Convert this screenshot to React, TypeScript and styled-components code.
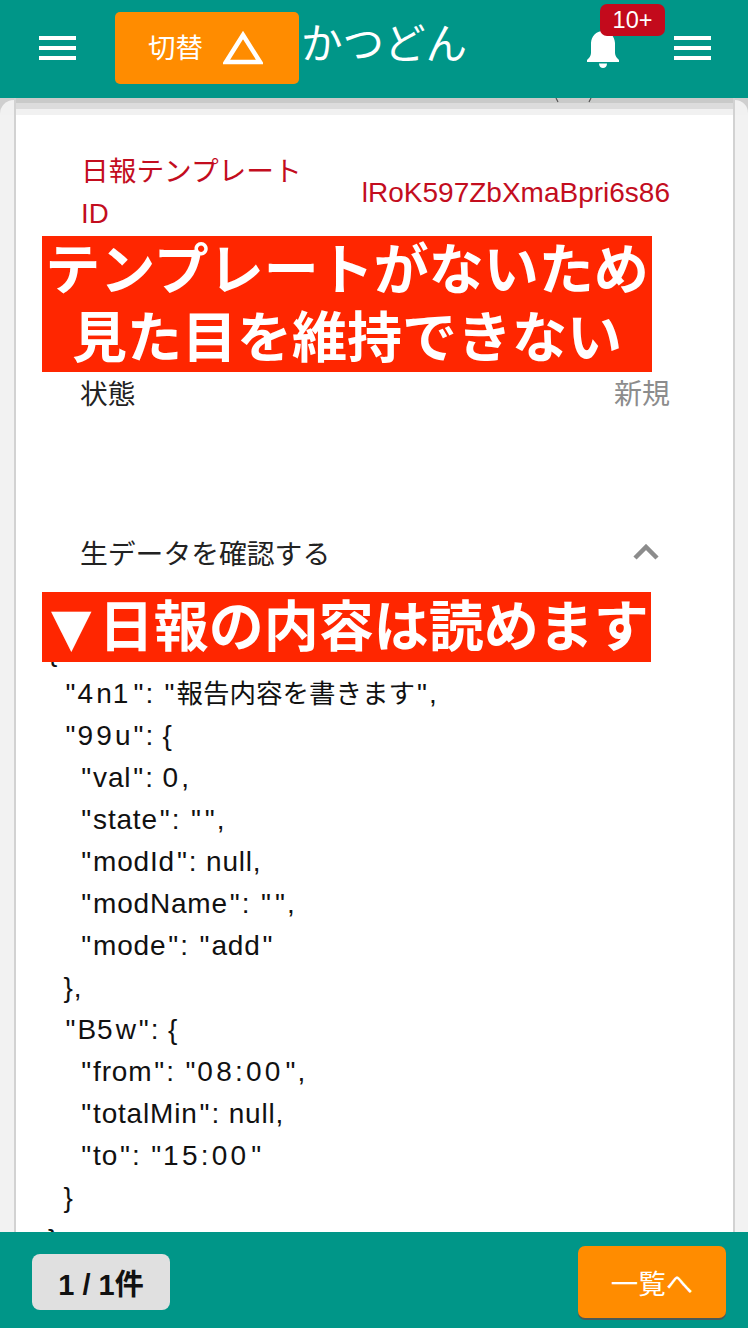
import React from 'react';
import styled, { createGlobalStyle } from 'styled-components';

const rawData = `{
  "4n1": "報告内容を書きます",
  "99u": {
    "val": 0,
    "state": "",
    "modId": null,
    "modName": "",
    "mode": "add"
  },
  "B5w": {
    "from": "08:00",
    "totalMin": null,
    "to": "15:00"
  }
}`;

type TokenKind = 'indent' | 'quote' | 'digit' | 'jp' | 'text';

const kindOf = (t: string): TokenKind => {
  if (/^ +$/.test(t)) return 'indent';
  if (t === '"') return 'quote';
  if (/^\d/.test(t)) return 'digit';
  if (/^[\u3040-\u9fff]/.test(t)) return 'jp';
  return 'text';
};

// the json font in the shot is wider on quotes and digits
const tokens = rawData.match(/^ +|\n|"|\d+(?::\d+)?|[\u3040-\u9fff]+|[^"\d\n\u3040-\u9fff]+/gm) || [];

const MenuIcon = () => (
  <svg width="37" height="24" viewBox="0 0 37 24" fill="#fff">
    <rect x="0" y="0" width="37" height="4" />
    <rect x="0" y="10" width="37" height="4" />
    <rect x="0" y="20" width="37" height="4" />
  </svg>
);

const BellIcon = () => (
  <svg width="32" height="38" viewBox="0 0 32 38" fill="#fff">
    <path d="M16 1C23 1 27.500 6 28 13V23C28 26 30 28 32 30V32H0V30C2 28 4 26 4 23V13C4.500 6 9 1 16 1Z" />
    <path d="M12 33.500H20C20 36.500 18 38 16 38S12 36.500 12 33.500Z" />
  </svg>
);

const App = () => {
  return (
    <Page>
      <GlobalStyle />
      <Header>
        <MenuButton><MenuIcon /></MenuButton>
        <SwitchButton>
          <SwitchLabel>切替</SwitchLabel>
          <svg width="40" height="34" viewBox="0 0 40 34" fill="none">
            <path d="M20 4 L37 31 H3 Z" stroke="#fff" strokeWidth="4.500" />
          </svg>
        </SwitchButton>
        <Title>かつどん</Title>
        <BellWrap>
          <BellIcon />
          <Badge>10+</Badge>
        </BellWrap>
        <MenuButton><MenuIcon /></MenuButton>
      </Header>

      <Content>
        <Strip>
          <Corner $side="left" />
          <Bands>
            <svg width="40" height="5" viewBox="0 0 40 5" fill="none">
              <path d="M1 0 L3 4 M36 0 L34 4" stroke="#555" strokeWidth="1.200" />
            </svg>
          </Bands>
          <Corner $side="right" />
        </Strip>
        <Card>
          <Row>
            <Label $red>日報テンプレート<br />ID</Label>
            <Value $red>lRoK597ZbXmaBpri6s86</Value>
          </Row>
          <Row $state>
            <Label>状態</Label>
            <Value>新規</Value>
          </Row>
          <Toggle>
            <span>生データを確認する</span>
            <svg width="26" height="16" viewBox="0 0 26 16" fill="none">
              <path d="M2 14 L13 3 L24 14" stroke="#8c8c8c" strokeWidth="4.500" />
            </svg>
          </Toggle>
          <Raw>
            {tokens.map((t, i) => (
              <Token key={i} $kind={kindOf(t)}>{t}</Token>
            ))}
          </Raw>
          <Callout $top={121} $width={610}>テンプレートがないため<br />見た目を維持できない</Callout>
          <Callout $top={477} $width={609} $single><Marker>▼</Marker>日報の内容は読めます</Callout>
        </Card>
      </Content>

      <Footer>
        <Counter>1 / 1件</Counter>
        <ListButton>一覧へ</ListButton>
      </Footer>
    </Page>
  );
};

const GlobalStyle = createGlobalStyle`
  html, body {
    margin: 0;
    padding: 0;
    background: #f2f2f2;
  }
  * {
    box-sizing: border-box;
  }
`;

const Page = styled.div`
  width: 748px;
  height: 1328px;
  display: flex;
  flex-direction: column;
  overflow: hidden;
  font-family: "Liberation Sans", "Noto Sans CJK JP", sans-serif;
`;

const Header = styled.header`
  flex: none;
  height: 98px;
  background: #009688;
  display: flex;
  align-items: center;
  padding: 0 37px 0 39px;
  position: relative;
  z-index: 2;
`;

const MenuButton = styled.div`
  width: 37px;
  height: 24px;
  margin-top: -2px;
  display: flex;
`;

const SwitchButton = styled.div`
  width: 184px;
  height: 72px;
  margin: -2px 2px 0 39px;
  padding-right: 3px;
  background: #ff8c00;
  border-radius: 5px;
  color: #fff;
  font-size: 27.500px;
  display: flex;
  align-items: center;
  justify-content: center;
  gap: 20px;
`;

const SwitchLabel = styled.span`
  padding-bottom: 4px;
`;

const Title = styled.div`
  font-size: 41.500px;
  color: #fff;
  margin-top: -16px;
  flex: 1;
`;

const BellWrap = styled.div`
  position: relative;
  width: 32px;
  height: 38px;
  margin-right: 55px;
`;

const Badge = styled.div`
  position: absolute;
  top: -26px;
  left: 13px;
  width: 65px;
  height: 32px;
  border-radius: 7px;
  background: #c30a1c;
  color: #fff;
  font-size: 23.500px;
  display: flex;
  align-items: center;
  justify-content: center;
`;

const Content = styled.main`
  flex: 1;
  min-height: 0;
  display: flex;
  flex-direction: column;
`;

const Strip = styled.div`
  flex: none;
  height: 17px;
  display: flex;
`;

const Corner = styled.div<{ $side: 'left' | 'right' }>`
  flex: 1;
  background: #cfcfcf;
  padding-top: 2px;
  &::before {
    content: '';
    display: block;
    height: 15px;
    background: #f1f1f1;
    border-${p => p.$side === 'left' ? 'top-left' : 'top-right'}-radius: 14px;
  }
`;

const Bands = styled.div`
  flex: none;
  width: 721px;
  height: 17px;
  padding-left: 539px;
  border-left: 2px solid #d2d2d2;
  border-right: 2px solid #d2d2d2;
  background: linear-gradient(#c9cac9 0 5px, #dcdcdc 5px 11px, #f1f1f1 11px);
  svg {
    display: block;
  }
`;

const Card = styled.section`
  flex: 1;
  min-height: 0;
  position: relative;
  overflow: hidden;
  width: 721px;
  margin-left: 14px;
  background: #fff;
  border-left: 2px solid #d2d2d2;
  border-right: 2px solid #d2d2d2;
`;

const Row = styled.div<{ $state?: boolean }>`
  display: flex;
  justify-content: space-between;
  align-items: center;
  padding: ${p => (p.$state ? '0' : '36px')} 63px 0 ${p => (p.$state ? '64px' : '65px')};
  margin-top: ${p => (p.$state ? '139px' : '0')};
`;

const Label = styled.div<{ $red?: boolean }>`
  font-size: 27.700px;
  line-height: 42px;
  color: ${p => (p.$red ? '#c30d1e' : '#222')};
`;

const Value = styled.div<{ $red?: boolean }>`
  font-size: 28px;
  line-height: 42px;
  color: ${p => (p.$red ? '#c30d1e' : '#8c8c8c')};
`;

const Toggle = styled.div`
  display: flex;
  justify-content: space-between;
  align-items: center;
  height: 44px;
  margin-top: 114px;
  padding: 0 74px 0 64px;
  font-size: 27.800px;
  color: #222;
`;

const Raw = styled.pre`
  margin: 57px 0 0 32px;
  font-family: "Liberation Sans", "Noto Sans CJK JP", sans-serif;
  font-size: 28px;
  line-height: 42px;
  color: #111;
`;

const Token = styled.span<{ $kind: TokenKind }>`
  letter-spacing: ${p => (p.$kind === 'digit' ? '3.2px' : p.$kind === 'text' ? '0.8px' : '0')};
  padding: ${p => (p.$kind === 'quote' ? '0 2px' : '0')};
  font-size: ${p => (p.$kind === 'jp' ? '26.500px' : '28px')};
`;

const Callout = styled.div<{ $top: number; $width: number; $single?: boolean }>`
  position: absolute;
  left: 26px;
  top: ${p => p.$top}px;
  width: ${p => p.$width}px;
  height: ${p => (p.$single ? '70px' : '136px')};
  background: #ff2600;
  color: #fff;
  font-size: 55px;
  font-weight: 700;
  line-height: ${p => (p.$single ? '70px' : '68px')};
  text-align: center;
  white-space: nowrap;
`;

const Marker = styled.span`
  display: inline-block;
  transform: scale(1.25);
`;

const Footer = styled.footer`
  flex: none;
  height: 96px;
  background: #009688;
  display: flex;
  justify-content: space-between;
  align-items: flex-start;
  padding: 14px 22px 0 32px;
  position: relative;
  z-index: 2;
`;

const Counter = styled.div`
  width: 138px;
  height: 56px;
  margin-top: 8px;
  border-radius: 8px;
  background: #e0e0e0;
  color: #111;
  font-size: 29px;
  font-weight: 700;
  display: flex;
  align-items: center;
  justify-content: center;
`;

const ListButton = styled.div`
  width: 148px;
  height: 72px;
  border-radius: 7px;
  background: #ff8c00;
  box-shadow: 0 2px 0 #4a5a58;
  color: #fff;
  font-size: 27.500px;
  display: flex;
  align-items: center;
  justify-content: center;
`;

export default App;
